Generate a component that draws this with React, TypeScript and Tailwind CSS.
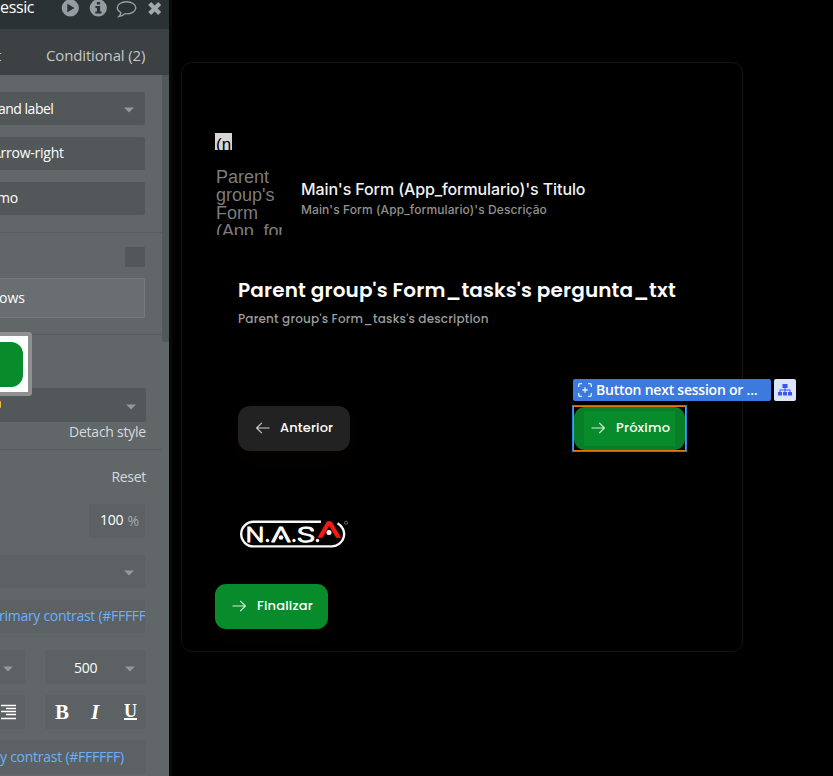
import type { ReactNode } from "react";

const SANS = "font-['Open_Sans','Noto_Sans',sans-serif]";
const GEO = "font-['Poppins','Inter',sans-serif]";

function Caret({ className = "" }: { className?: string }) {
  return (
    <svg width="10" height="6" viewBox="0 0 10 6" className={"shrink-0 " + className}>
      <path d="M0 .5h10L5 5.5z" fill="#92989b" />
    </svg>
  );
}

function Arrow({ flip = false, color = "#ffffff" }: { flip?: boolean; color?: string }) {
  return (
    <svg width="14" height="12" viewBox="0 0 14 12" className={"shrink-0 " + (flip ? "-scale-x-100" : "")}>
      <path d="M.5 6h13M8.2.8 13.4 6l-5.2 5.2" fill="none" stroke={color} strokeWidth="1.1" />
    </svg>
  );
}

function Field({ children, className }: { children?: ReactNode; className: string }) {
  return (
    <div className={"flex shrink-0 items-center overflow-hidden rounded-r-[2px] whitespace-nowrap text-white " + className}>
      {children}
    </div>
  );
}

function Divider({ className }: { className: string }) {
  return <div className={"h-px w-[162px] shrink-0 bg-[#585d60] " + className} />;
}

function PropertyPanel() {
  return (
    <aside className={"flex h-full w-[169px] shrink-0 flex-col overflow-hidden text-[14px] leading-5 " + SANS}>
      <header className="flex h-[29px] shrink-0 items-start bg-[#2b3234] text-white">
        <span className="-mt-[5px] w-[61px] shrink-0 text-[16px] leading-[24px] tracking-[-0.35px]">essic</span>
        <svg width="110" height="20" viewBox="61 0 110 20" fill="none" className="shrink-0">
          <circle cx="70.3" cy="8" r="8.6" fill="#949da1" />
          <path d="M67.3 3.7v8.6l7.2-4.3z" fill="#2b3234" />
          <circle cx="98.3" cy="8" r="8.6" fill="#949da1" />
          <path d="M96.9 2h3.2v2.6h-3.2zM95.4 6h4.7v5.4h1.5v2h-6.3v-2h1.6V8h-1.5z" fill="#2b3234" />
          <path d="M126.5 1.700c5.3 0 9.3 2.700 9.3 6.100s-4 6.100-9.3 6.100l-1.6-.1c-1.700 1.600-3.700 2.600-6 2.800 1.200-1.100 1.800-2.400 2-4-2.300-1.200-3.600-2.800-3.600-4.800 0-3.400 4-6.100 9.200-6.100z" stroke="#949da1" strokeWidth="1.400" />
          <path d="m149.700 3.500 10 10m0-10-10 10" stroke="#a1a9ac" strokeWidth="4.200" />
        </svg>
      </header>
      <nav className="flex h-[46px] shrink-0 items-center bg-[#3c4143] pt-[6px] text-[15px] text-[#c5c7c8]">
        <span className="-ml-[4px] w-[50px]">t</span>
        <span className="-mt-px whitespace-nowrap tracking-[-0.15px]">Conditional (2)</span>
      </nav>
      <div className="flex min-h-0 flex-1 bg-[#616669]">
        <div className="flex w-[162px] shrink-0 flex-col">
          <Field className="mt-[17px] h-[33px] w-[145px] justify-between bg-[#525759] pr-[11px]">
            <span className="-ml-[2px] tracking-[-0.5px]">and label</span>
            <Caret className="mt-[2px]" />
          </Field>
          <Field className="mt-[12px] h-[33px] w-[145px] bg-[#525759] pb-[2px]">
            <span className="-ml-[8px] tracking-[-0.25px]">Arrow-right</span>
          </Field>
          <Field className="mt-[12px] h-[33px] w-[145px] bg-[#525759] pb-[2px]">
            <span className="-ml-[3px] tracking-[-0.2px]">mo</span>
          </Field>
          <Divider className="mt-[17px]" />
          <div className="mt-[14px] ml-[125px] h-[20px] w-[20px] shrink-0 rounded-[1px] bg-[#525759]" />
          <Field className="mt-[11px] h-[40px] w-[145px] border border-l-0 border-[#757a7d] bg-[#696e70] font-medium">
            <span className="-ml-[1px]">ows</span>
          </Field>
          <Divider className="mt-[16px]" />
          <div className="z-10 -mt-[3px] h-[64px] w-[32px] shrink-0 rounded-r-[4px] border-4 border-l-0 border-[#909090] bg-white py-[6px]">
            <div className="h-[45px] w-[23px] rounded-r-[12px] bg-[#088c2b]" />
          </div>
          <Field className="-mt-[8px] h-[34px] w-[146px] justify-between bg-[#525759] pr-[10px]">
            <span className="-mt-[2px] h-[7px] w-[1px] rounded-r-sm bg-[#f5b93a]" />
            <Caret className="mt-[3px]" />
          </Field>
          <span className="w-[146px] text-right tracking-[-0.24px] text-[#d8dadb]">Detach style</span>
          <Divider className="mt-[7px]" />
          <span className="mt-[17px] w-[146px] text-right tracking-[-0.3px] text-[#d8dadb]">Reset</span>
          <Field className="mt-[17px] ml-[89px] h-[34px] w-[56px] rounded-[2px] bg-[#5c6163] pb-[2px] pl-[11px]">
            <span className="tracking-[-0.2px]">100</span>
            <span className="mt-[2px] ml-[4px] text-[14px] tracking-[-0.5px] text-[#a5a9ab]">%</span>
          </Field>
          <Field className="mt-[17px] h-[33px] w-[145px] justify-end bg-[#5c6163] pr-[11px]">
            <Caret className="mt-[2px]" />
          </Field>
          <Field className="mt-[12px] h-[33px] w-[145px] bg-[#5c6163] pb-[2px]">
            <span className="-ml-[1px] tracking-[-0.28px] text-[#6cb0fb]">rimary contrast (#FFFFF</span>
          </Field>
          <div className="mt-[17px] flex h-[34px] shrink-0 gap-[20px]">
            <Field className="w-[25px] bg-[#5c6163] pl-[3px]">
              <Caret className="mt-[3px]" />
            </Field>
            <Field className="w-[101px] justify-between rounded-[2px] bg-[#5c6163] pt-px pr-[11px] pl-[29px]">
              <span className="tracking-[-0.2px]">500</span>
              <Caret className="mt-[3px]" />
            </Field>
          </div>
          <div className="mt-[11px] flex h-[34px] shrink-0 gap-[20px]">
            <Field className="w-[25px] bg-[#5c6163]">
              <svg width="17" height="16" viewBox="0 0 17 16" stroke="#fff" strokeWidth="1.700">
                <path d="M1 1.500h15M6 4.500h10M1 7.500h15M6 10.500h10M1 14.500h15" />
              </svg>
            </Field>
            <Field className="w-[101px] rounded-[2px] bg-[#5c6163] font-['Liberation_Serif',serif] text-[21px] font-bold">
              <span className="ml-[10px] w-[36px]">B</span>
              <span className="w-[33px] italic">I</span>
              <span className="border-b-2 border-white text-[18px] leading-[14px]">U</span>
            </Field>
          </div>
          <Field className="mt-[11px] h-[34px] w-[146px] bg-[#5c6163]">
            <span className="tracking-[-0.25px] text-[#6cb0fb]">y contrast (#FFFFFF)</span>
          </Field>
        </div>
        <div className="h-[267px] w-[7px] bg-[#525759]" />
      </div>
    </aside>
  );
}

function NasaLogo() {
  return (
    <svg width="112" height="32" viewBox="238 518 112 32" fill="none">
      <path d="M321 521.800h-67.500a12.300 12.300 0 0 0 0 24.600h78.500a12.300 12.300 0 0 0 5.500-23.200" stroke="#f7f7f7" strokeWidth="2.400" />
      <g className="font-['Inter',sans-serif]" fontSize="20.500" fontWeight="300" fill="#fff" stroke="#fff" strokeWidth=".9" strokeLinejoin="round">
        <text x="245.500" y="541.500" textLength="19" lengthAdjust="spacingAndGlyphs">N</text>
        <text x="271" y="541.500" textLength="20" lengthAdjust="spacingAndGlyphs">Λ</text>
        <text x="296.500" y="541.500" textLength="19" lengthAdjust="spacingAndGlyphs">S</text>
        <text x="318" y="537" textLength="22" lengthAdjust="spacingAndGlyphs" fill="#f51b0d" stroke="#f51b0d" strokeWidth="1.500">Λ</text>
      </g>
      <g fill="#fff">
        <circle cx="267.500" cy="540.500" r="1.700" />
        <circle cx="281" cy="537.500" r="2.300" />
        <circle cx="294" cy="540.500" r="1.700" />
        <circle cx="317.500" cy="540.500" r="1.700" />
        <circle cx="329" cy="532.500" r="2.500" />
      </g>
      <circle cx="346" cy="522.700" r="1.600" stroke="#777" strokeWidth=".8" />
    </svg>
  );
}

function Canvas() {
  return (
    <main className="min-w-0 flex-1 border-l-[3px] border-[#090a0a] bg-black pt-[62px] pl-[9px]">
      <section className="h-[590px] w-[562px] rounded-[11px] border border-[#141414] pt-[70px] pl-[33px]">
        <div className="h-[17px] w-[17px] overflow-hidden bg-[#d6d6d6] pl-px font-['Liberation_Sans',sans-serif] text-[17px] leading-[23px] text-black">
          (n
        </div>
        <div className="mt-[18px] flex h-[67px]">
          <div className="w-[67px] overflow-hidden pl-px font-['Liberation_Sans',sans-serif] text-[18px] leading-[18px] whitespace-nowrap text-[#7c7c7c]">
            Parent
            <br />
            group's
            <br />
            Form
            <br />
            <span className="tracking-[-0.1px]">(App_formulario)</span>
          </div>
          <div className="ml-[19px] pt-[10px] font-['Inter',sans-serif] font-medium whitespace-nowrap">
            <div className="text-[16px] leading-[23px] tracking-[-0.11px] text-[#f2f2f2]">Main's Form (App_formulario)'s Titulo</div>
            <div className="text-[12px] leading-[18px] tracking-[0.1px] text-[#929292]">Main's Form (App_formulario)'s Descrição</div>
          </div>
        </div>
        <div className={"ml-[23px] w-[449px] whitespace-nowrap " + GEO}>
          <h1 className="mt-[41px] text-[20px] leading-[28px] font-semibold tracking-[0.13px] text-white">
            Parent group's Form_tasks's pergunta_txt
          </h1>
          <p className="mt-[6px] text-[12px] leading-[18px] font-medium tracking-[0.2px] text-[#9b9b9b]">
            Parent group's Form_tasks's description
          </p>
          <div className="mt-[51px] flex h-[73px] items-end justify-between text-[13px] font-medium text-white">
            <button className="mb-px flex h-[45px] w-[112px] items-center rounded-[12px] bg-[#222222] pb-[2px] pl-[18px] shadow-[0_6px_30px_#080400]">
              <Arrow flip color="#d0d0d0" />
              <span className="ml-[10px] tracking-[0.15px]">Anterior</span>
            </button>
            <div className="relative h-[47px] w-[115px] border border-[#2286df]">
              <div className="h-[45px] border border-[#e8790c] bg-black">
                <button className="flex h-[43px] w-full items-center rounded-[11px] bg-[#087e28] px-[10px]">
                  <span className="flex h-[35px] w-[91px] items-center bg-[#088c2b] pb-[2px] pl-[7px]">
                    <Arrow color="#d7eedc" />
                    <span className="ml-[11px] tracking-[0.2px]">Próximo</span>
                  </span>
                </button>
              </div>
              <div className={"absolute -top-[27px] left-0 flex gap-[3px] font-semibold " + SANS}>
                <div className="flex h-[22px] w-[198px] items-center rounded-[2px] bg-[#3d7ade] pl-[5px] text-[14px]">
                  <svg width="14" height="14" viewBox="0 0 14 14" fill="none" stroke="#e4edfc" strokeWidth="1.300">
                    <path d="M.7 4V2Q.7.7 2 .7h2M10 .7h2q1.300 0 1.300 1.300v2M13.300 10v2q0 1.300-1.300 1.300h-2M4 13.300H2Q.7 13.300.7 12v-2M7 4.300v5.400M4.300 7h5.400" />
                  </svg>
                  <span className="-mt-px ml-[4px] tracking-[-0.23px]">Button next session or ...</span>
                </div>
                <div className="flex h-[22px] w-[22px] items-center justify-center rounded-[2px] bg-[#dce6fa]">
                  <svg width="14" height="12" viewBox="0 0 14 12" fill="#3b55ee">
                    <path d="M4.500 0h5v4h-5zM0 8h4v3.500H0zM5 8h4v3.500H5zM10 8h4v3.500h-4zM6.500 4h1v4h-1zM1.500 5.500h11v1h-11zM1.500 5.500h1V8h-1zM11.500 5.500h1V8h-1z" />
                  </svg>
                </div>
              </div>
            </div>
          </div>
        </div>
        <div className="mt-[66px] ml-[23px] h-[32px]">
          <NasaLogo />
        </div>
        <button className={"mt-[34px] flex h-[45px] w-[113px] items-center rounded-[11px] bg-[#088c2b] pb-[2px] pl-[17px] text-[13px] font-medium text-white shadow-[0_6px_30px_#080400] " + GEO}>
          <Arrow color="#d7eedc" />
          <span className="ml-[11px] tracking-[0.2px]">Finalizar</span>
        </button>
      </section>
    </main>
  );
}

export default function App() {
  return (
    <div className="flex h-[776px] w-[833px] overflow-hidden bg-black">
      <PropertyPanel />
      <Canvas />
    </div>
  );
}
